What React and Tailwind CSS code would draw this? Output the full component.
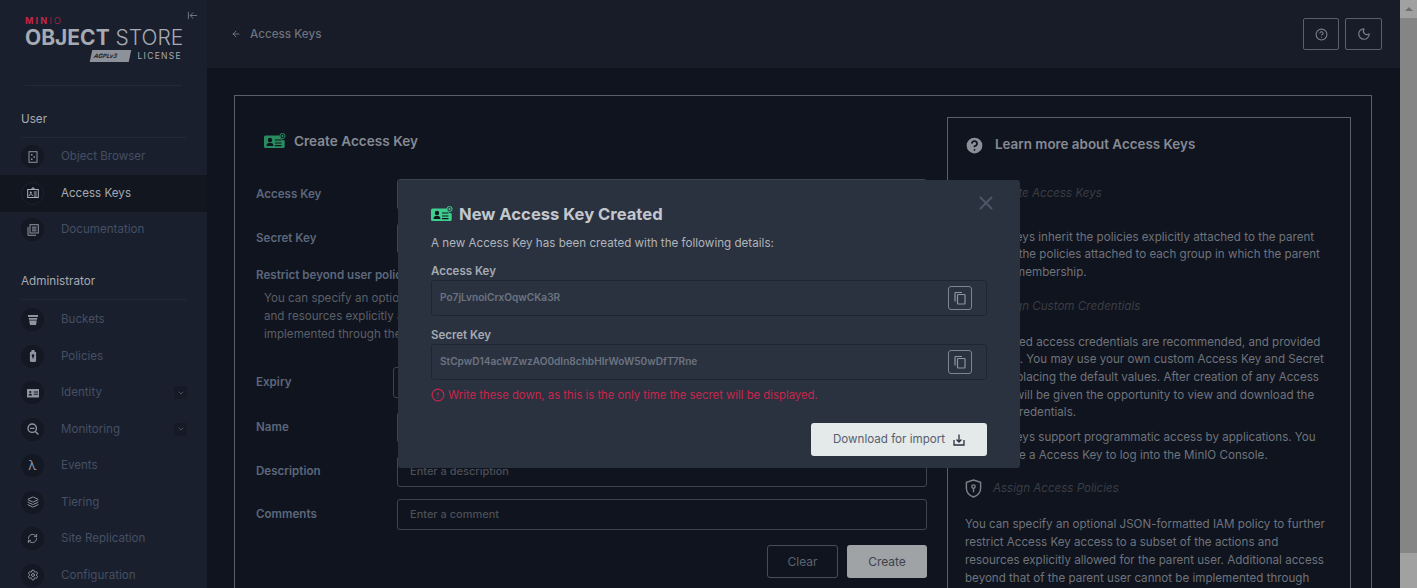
import { ArrowLeft, ArrowLeftToLine, ChevronDown, CircleHelp, CircleAlert, Moon, X, RefreshCw, Settings, Layers } from "lucide-react"

const font = { fontFamily: "Inter, sans-serif" }

function KeyIcon({ className, color }) {
    return (
        <svg viewBox="0 0 22 16" className={className}>
            <path d="M1.5 2.5h14.2a5 5 0 0 0 5 5V13.5a1.5 1.5 0 0 1-1.5 1.5H1.5A1.5 1.5 0 0 1 0 13.5V4a1.5 1.5 0 0 1 1.5-1.5z" fill={color} />
            <circle cx="6" cy="7" r="2.2" fill="#10141e" />
            <path d="M2.5 13c0-2.4 1.6-3.3 3.5-3.3s3.5.9 3.5 3.3z" fill="#10141e" />
            <path d="M11 7h6.5M11 10h6.5M11 12.6h6.5" stroke="#10141e" strokeWidth="1.2" />
            <circle cx="18.5" cy="3" r="2.6" fill="none" stroke={color} strokeWidth="1" />
            <path d="M18.5 1.8v2.4M17.3 3h2.4" stroke={color} strokeWidth="0.9" />
        </svg>
    )
}

function BucketIcon() {
    return (
        <svg viewBox="0 0 12 12" className="w-3 h-3" fill="#8d95a3">
            <path d="M1 1h10v2H1zM1.7 4h8.6l-.3 1.7H2zM2.2 6.5h7.6L9 11H3z" />
        </svg>
    )
}

function BrowserIcon() {
    return (
        <svg viewBox="0 0 12 12" className="w-3 h-3" fill="none" stroke="#8d95a3" strokeWidth="1">
            <rect x="2" y="0.7" width="8" height="10.6" />
            <path d="M4 3h1.5v1.5H4zM6.5 5.2H8v1.5H6.5zM4 7.5h1.5V9H4z" fill="#8d95a3" stroke="none" />
        </svg>
    )
}

function SmallKeyIcon() {
    return (
        <svg viewBox="0 0 12 12" className="w-3 h-3" fill="none" stroke="#aab0bb" strokeWidth="1">
            <rect x="0.7" y="2.5" width="10.6" height="8" />
            <circle cx="3.8" cy="5.4" r="1" fill="#aab0bb" stroke="none" />
            <path d="M2.2 9c0-1.4.8-1.9 1.6-1.9s1.6.5 1.6 1.9M6.8 5h3M6.8 7h3M6.8 9h3M5 2.5V1h2v1.5" />
        </svg>
    )
}

function DocsIcon() {
    return (
        <svg viewBox="0 0 12 12" className="w-3 h-3" fill="none" stroke="#8d95a3" strokeWidth="1">
            <rect x="3" y="0.7" width="8.3" height="8.3" />
            <path d="M1 3v8.3h8M5 3.2h4.5M5 5h4.5M5 6.8h4.5" />
        </svg>
    )
}

function PolicyIcon() {
    return (
        <svg viewBox="0 0 12 12" className="w-3 h-3" fill="#8d95a3">
            <path d="M4.5 0h3v1.4l1.6.8V11l-1 1H3.9l-1-1V2.2l1.6-.8z" />
            <circle cx="6" cy="5.6" r="1.3" fill="#131823" />
            <rect x="5.4" y="6" width="1.2" height="2.4" fill="#131823" />
        </svg>
    )
}

function IdentityIcon() {
    return (
        <svg viewBox="0 0 12 12" className="w-3 h-3" fill="#8d95a3">
            <path d="M0 2h12v8.5H0z" />
            <circle cx="3.3" cy="5" r="1.1" fill="#131823" />
            <path d="M1.5 8.6c0-1.4.8-1.9 1.8-1.9s1.8.5 1.8 1.9zM6.8 4.6H11v1H6.8zM6.8 6.8H11v1H6.8z" fill="#131823" />
        </svg>
    )
}

function MonitorIcon() {
    return (
        <svg viewBox="0 0 12 12" className="w-3 h-3" fill="none" stroke="#8d95a3" strokeWidth="1.4">
            <circle cx="5.2" cy="5.2" r="4.2" />
            <path d="M8.4 8.4L11.4 11.4M3 5.4h4.4" />
        </svg>
    )
}

function NavItem({ icon, label, active, chevron }) {
    return (
        <div className={`flex items-center shrink-0 h-[36.5px] pl-[21px] ${active ? "bg-[#12161f]" : ""}`}>
            <div className={`w-[23px] h-[23px] rounded-full flex items-center justify-center ${active ? "bg-[#111520] border border-[#1c2230]" : "bg-[#131823]"}`}>
                {icon}
            </div>
            <span className={`ml-[17px] flex-1 text-[11.6px] ${active ? "text-[#a3a9b3]" : "text-[#454f63]"}`}>{label}</span>
            {chevron && (
                <div className="w-[13px] h-[13px] mr-5 bg-[#151a26] flex items-center justify-center">
                    <ChevronDown size={8} className="text-[#636b7a]" />
                </div>
            )}
        </div>
    )
}

function Sidebar() {
    return (
        <aside className="w-[207px] shrink-0 bg-[#191f2d] flex flex-col overflow-hidden">
            <div className="relative shrink-0 h-[86px] mx-[25px] border-b border-[#222938]">
                <ArrowLeftToLine size={11} className="absolute left-[162px] top-[10px] text-[#767c88]" />
                <div className="pt-[17px] text-[#c4254a] text-[9px] leading-[8px] tracking-[2.2px]">
                    <span className="font-bold">MIN</span>
                    <span className="font-light">IO</span>
                </div>
                <div className="text-[21px] leading-[22px] mt-[2px] whitespace-nowrap text-[#a6aab2]">
                    <span className="font-bold">OBJECT</span> <span className="font-light">STORE</span>
                </div>
                <div className="flex items-center justify-end mt-[1px]">
                    <div className="w-[39px] h-[12px] bg-[#8d9199] skew-x-[-12deg] text-[6px] leading-[12px] font-bold italic text-[#191f2d] pl-[3px]">AGPLv3</div>
                    <span className="ml-[8px] text-[8.5px] tracking-[1.3px] text-[#a6aab2]">LICENSE</span>
                </div>
            </div>

            <div className="shrink-0 mt-[25px] mx-[21px] h-[27px] border-b border-[#222938] text-[11.7px] leading-4 text-[#a6aab2]">User</div>
            <div className="mt-[0.5px]">
                <NavItem icon={<BrowserIcon />} label="Object Browser" />
                <NavItem icon={<SmallKeyIcon />} label="Access Keys" active />
                <NavItem icon={<DocsIcon />} label="Documentation" />
            </div>

            <div className="shrink-0 mt-[25px] mx-[21px] h-[27px] border-b border-[#222938] text-[11.7px] leading-4 text-[#a6aab2]">Administrator</div>
            <div className="mt-[1.5px]">
                <NavItem icon={<BucketIcon />} label="Buckets" />
                <NavItem icon={<PolicyIcon />} label="Policies" />
                <NavItem icon={<IdentityIcon />} label="Identity" chevron />
                <NavItem icon={<MonitorIcon />} label="Monitoring" chevron />
                <NavItem icon={<span className="text-[13px] leading-none text-[#8d95a3]">λ</span>} label="Events" />
                <NavItem icon={<Layers size={12} className="text-[#8d95a3]" />} label="Tiering" />
                <NavItem icon={<RefreshCw size={11} className="text-[#8d95a3]" />} label="Site Replication" />
                <NavItem icon={<Settings size={12} className="text-[#8d95a3]" />} label="Configuration" />
            </div>
        </aside>
    )
}

function Row({ label, top, wide, children }) {
    return (
        <div className={`flex items-center h-[31px] ${top}`}>
            <div className={`${wide ? "w-[137px]" : "w-[141px]"} shrink-0 pt-[1px] text-[11.6px] font-semibold text-[#5c677c] whitespace-nowrap`}>{label}</div>
            {children}
        </div>
    )
}

function Input({ placeholder }) {
    return (
        <div className="flex-1 h-[31px] border border-[#3f444e] rounded-[3px] px-3 flex items-center text-[11px] font-medium text-[#4b4f57]">
            {placeholder}
        </div>
    )
}

function CreateForm() {
    return (
        <div className="w-[671px] shrink-0">
            <div className="flex items-center h-[22px] mt-[34px] ml-[8px]">
                <KeyIcon className="w-[22px] h-[16px]" color="#2a8a60" />
                <span className="ml-2 text-[13.6px] font-semibold text-[#858a94]">Create Access Key</span>
            </div>
            <Row label="Access Key" top="mt-[27px]"><Input placeholder="" /></Row>
            <Row label="Secret Key" top="mt-[13px]"><Input placeholder="" /></Row>
            <div className="mt-[13px] text-[11.6px] font-semibold text-[#5c677c]">Restrict beyond user policy</div>
            <div className="mt-[6px] ml-2 text-[11.6px] leading-[17.6px] text-[#5a5f68] whitespace-nowrap">
                You can specify an optional JSON-formatted IAM policy to further restrict Access Key access to a subset of the actions<br />
                and resources explicitly allowed for the parent user. Additional access beyond that of the parent user cannot be<br />
                implemented through these policies.
            </div>
            <Row label="Expiry" top="mt-[24px]" wide><Input placeholder="" /></Row>
            <Row label="Name" top="mt-[14px]"><Input placeholder="" /></Row>
            <Row label="Description" top="mt-[13px]"><Input placeholder="Enter a description" /></Row>
            <Row label="Comments" top="mt-[12px]"><Input placeholder="Enter a comment" /></Row>
            <div className="flex justify-end gap-[9px] mt-[15px]">
                <div className="w-[71px] h-[33px] border border-[#474c55] rounded-[3px] flex items-center justify-center text-xs text-[#5c6470]">Clear</div>
                <div className="w-[80px] h-[33px] bg-[#a0a3a6] rounded-[3px] flex items-center justify-center text-xs text-[#3d424c]">Create</div>
            </div>
        </div>
    )
}

function LearnMore() {
    return (
        <div className="w-[404px] h-[600px] shrink-0 ml-[20px] mt-[21px] border border-[#5a5f68] px-[17px] text-[11.6px] leading-[17.7px] text-[#6e737c]">
            <div className="flex items-center h-[18px] mt-[18px] -ml-[1px]">
                <CircleHelp size={21} fill="#8a8f98" className="text-[#10141e]" />
                <span className="ml-[10px] text-[13.4px] font-semibold text-[#858a94]">Learn more about Access Keys</span>
            </div>
            <div className="mt-[31px] ml-[27px] italic text-[#3a3d44]">Create Access Keys</div>
            <p className="mt-[26px]">Access Keys inherit the policies explicitly attached to the parent user, and the policies attached to each group in which the parent user has membership.</p>
            <div className="mt-[16px] ml-[27px] italic text-[#3a3d44]">Assign Custom Credentials</div>
            <p className="mt-[18px]">Randomized access credentials are recommended, and provided by default. You may use your own custom Access Key and Secret Key by replacing the default values. After creation of any Access Key, you will be given the opportunity to view and download the account credentials.</p>
            <p className="mt-[7px]">Access Keys support programmatic access by applications. You cannot use a Access Key to log into the MinIO Console.</p>
            <div className="flex items-center mt-[15px] h-[18px]">
                <svg viewBox="0 0 18 20" className="w-[17px] h-[19px]" fill="none" stroke="#7c8089" strokeWidth="1.5">
                    <path d="M9 1l7.5 2.5V10c0 4.5-3.5 7.5-7.5 9-4-1.5-7.5-4.5-7.5-9V3.500z" />
                    <circle cx="9" cy="8" r="1.8" />
                    <path d="M9 9.5V14" />
                </svg>
                <span className="ml-[11px] italic text-[#3a3d44]">Assign Access Policies</span>
            </div>
            <p className="mt-[19px]">You can specify an optional JSON-formatted IAM policy to further restrict Access Key access to a subset of the actions and resources explicitly allowed for the parent user. Additional access beyond that of the parent user cannot be implemented through</p>
        </div>
    )
}

function KeyField({ value }) {
    return (
        <div className="h-[36px] border border-[#1f2633] rounded-[3px] flex items-center justify-between pl-2 pr-[14px]">
            <span className="text-[10.1px] font-semibold text-[#6d7481]">{value}</span>
            <div className="w-[24px] h-[24px] border border-[#7c8593] rounded-[3px] flex items-center justify-center">
                <svg viewBox="0 0 14 14" className="w-[14px] h-[14px]" fill="none" stroke="#8d95a3" strokeWidth="1.2">
                    <path d="M2 10.5V2.5a1 1 0 0 1 1-1h6" />
                    <rect x="4.5" y="3.5" width="7.5" height="9.5" rx="0.8" />
                </svg>
            </div>
        </div>
    )
}

function Modal() {
    return (
        <div className="absolute left-[398px] top-[180px] w-[622px] h-[288px] bg-[#2a3240] rounded-[3px] pt-[24px] pl-[33px] pr-[33px]">
            <X size={22} strokeWidth={2.2} className="absolute right-[23px] top-[12px] text-[#4d5665]" />
            <div className="flex items-center h-[20px]">
                <KeyIcon className="w-[22px] h-[16px]" color="#3ecf8e" />
                <span className="ml-[6px] text-[16.6px] font-bold text-[#c3c7cd]">New Access Key Created</span>
            </div>
            <div className="mt-[10px] text-[11.63px] leading-[18px] text-[#b0b4bb]">A new Access Key has been created with the following details:</div>
            <div className="mt-[10px] text-[11.5px] leading-[18px] font-semibold text-[#a5aab3]">Access Key</div>
            <KeyField value="Po7jLvnoiCrxOqwCKa3R" />
            <div className="mt-[10px] text-[11.5px] leading-[18px] font-semibold text-[#a5aab3]">Secret Key</div>
            <KeyField value="StCpwD14acWZwzAO0dIn8chbHIrWoW50wDfT7Rne" />
            <div className="flex items-center mt-[7px] h-[16px] text-[11.3px] text-[#c8264c]">
                <CircleAlert size={14} className="mr-[3px]" />
                Write these down, as this is the only time the secret will be displayed.
            </div>
            <div className="flex justify-end mt-[20px]">
                <div className="w-[176px] h-[33px] bg-[#e4e9e9] rounded-[3px] flex items-center justify-center text-[11.6px] text-[#566070]">
                    Download for import
                    <svg viewBox="0 0 12 12" className="w-3 h-3 ml-2" fill="none" stroke="#2a3240" strokeWidth="1.3">
                        <path d="M6 0.5V8M3.5 5.5L6 8l2.5-2.5" />
                        <path d="M1 6v5h10V6" />
                    </svg>
                </div>
            </div>
        </div>
    )
}

function Scrollbar() {
    return (
        <div className="w-[17px] shrink-0 bg-[#a1a1a1] flex flex-col">
            <div className="h-[18px] flex items-center justify-center">
                <div className="w-0 h-0 border-x-[4px] border-x-transparent border-b-[4px] border-b-[#6e6e6e]" />
            </div>
            <div className="h-[535px] bg-[#858585]" />
        </div>
    )
}

export default function App() {
    return (
        <div className="relative flex w-[1417px] h-[588px] overflow-hidden bg-[#10141e]" style={font}>
            <Sidebar />
            <main className="flex-1 min-w-0 flex flex-col">
                <header className="h-[68px] shrink-0 bg-[#171c28] flex items-center pl-[24px] pr-[18px]">
                    <ArrowLeft size={10} className="text-[#7c818b]" />
                    <span className="ml-[9px] mt-[1px] text-[11.7px] font-medium text-[#6c717b]">Access Keys</span>
                    <div className="ml-auto flex gap-[6px]">
                        <div className="w-[36px] h-[32px] border border-[#5a5f68] rounded-[2px] flex items-center justify-center">
                            <CircleHelp size={13} className="text-[#7c818b]" />
                        </div>
                        <div className="w-[37px] h-[32px] border border-[#5a5f68] rounded-[2px] flex items-center justify-center">
                            <Moon size={14} className="text-[#7c818b]" />
                        </div>
                    </div>
                </header>
                <div className="shrink-0 mt-[27px] ml-[27px] mr-[28px] border border-[#5a5f68] h-[600px] flex pl-[21px]">
                    <CreateForm />
                    <LearnMore />
                </div>
            </main>
            <Scrollbar />
            <Modal />
        </div>
    )
}
